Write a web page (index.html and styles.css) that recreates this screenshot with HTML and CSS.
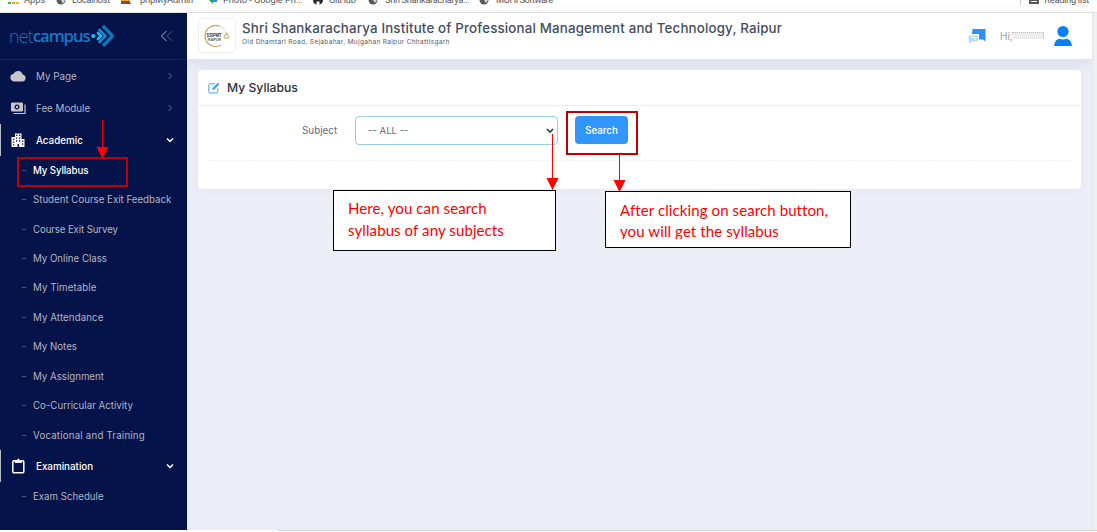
FILE: index.html
```html
<!DOCTYPE html>
<html lang="en">
<head>
<meta charset="utf-8">
<title>My Syllabus</title>
<link rel="stylesheet" href="styles.css">
</head>
<body>
<div class="bookmarks">
  <div class="bm w-apps"><svg width="12" height="6"><path fill="#4caf50" d="M0 2h3v2H0z"/><path fill="#e89b3c" d="M4 2h3v2H4z"/><path fill="#f3b51c" d="M8 2h3v2H8z"/></svg><span>Apps</span></div>
  <div class="bm w-local"><svg width="12" height="6"><circle cx="5" cy="0" r="4.5" fill="#55595e"/><path d="M5 0h4L7 4z" fill="#d5d7d9"/></svg><span>Localhost</span></div>
  <div class="bm w-php"><svg width="12" height="6"><path d="M1 0h8l2 4H1z" fill="#765438"/><path d="M1 0h9v1H1z" fill="#f0a13a"/></svg><span>phpMyAdmin</span></div>
  <div class="bm w-photo"><svg width="12" height="6"><path d="M1 0h4v4z" fill="#1fa463"/><path d="M5 0h4v2H5z" fill="#4285f4"/></svg><span>Photo - Google Ph...</span></div>
  <div class="bm w-git"><svg width="12" height="6"><circle cx="6" cy="0" r="5" fill="#24292e"/><path d="M4.500 1.500h3v4h-3z" fill="#fff"/></svg><span>GitHub</span></div>
  <div class="bm w-shri"><svg width="12" height="6"><circle cx="5" cy="0" r="4.5" fill="#55595e"/><path d="M5 0h4L7 3z" fill="#d5d7d9"/></svg><span>Shri Shankaracharya...</span></div>
  <div class="bm w-mohi"><svg width="12" height="6"><circle cx="5" cy="0" r="4.5" fill="#55595e"/><path d="M5 0h4L7 3z" fill="#d5d7d9"/></svg><span>MOHI Software</span></div>
  <div class="bm reading"><svg width="12" height="6"><path d="M1 0h10v4H1z" fill="#55595e"/><path d="M3 1h6v1H3z" fill="#eee"/></svg><span>Reading list</span></div>
</div>
<div class="app">
  <nav class="sidebar">
    <div class="brand">
      <div class="logo"><span class="net">net</span><span class="campus">campus</span>
        <svg class="mark" width="24" height="24" viewBox="0 0 24 24"><g fill="none" stroke-linecap="round" stroke-linejoin="round"><path d="M13 3l8.500 9-8.500 9" stroke="#1173b8" stroke-width="3.600" stroke-dasharray="5 1.500"/><path d="M8.500 6l6 6-6 6" stroke="#1688cd" stroke-width="2.800" stroke-dasharray="5 1.500"/><path d="M7 9l3 3-3 3" stroke="#20b5f3" stroke-width="2.800"/></g><circle cx="2.300" cy="12" r="2.100" fill="#25bdf6"/></svg>
      </div>
      <svg width="13" height="12" viewBox="0 0 13 12" fill="none" stroke-width="1.300"><path d="M6.500 1l-5 5 5 5" stroke="#666b90"/><path d="M12 1L7 6l5 5" stroke="#353b69"/></svg>
    </div>
    <div class="menu">
      <div class="item"><svg class="ico" viewBox="0 0 16 16"><path fill="#c7c7cb" d="M4 13.500a3.900 3.900 0 0 1-.5-7.700A4.900 4.900 0 0 1 12.700 6.600 3.500 3.500 0 0 1 12.500 13.500z"/></svg><span>My Page</span><svg class="chev" viewBox="0 0 8 8"><path d="M2.500 1l3 3-3 3"/></svg></div>
      <div class="item"><svg class="ico" viewBox="0 0 16 16"><path fill="#c7c7cb" fill-rule="evenodd" d="M2 2.500h10q1 0 1 1v7q0 1-1 1H2q-1 0-1-1v-7q0-1 1-1zM7 4.500a2.500 2.500 0 1 0 .01 0z"/><circle cx="7" cy="7" r="1.200" fill="#c7c7cb"/><path d="M15 4.500v9H3.500" fill="none" stroke="#c7c7cb" stroke-width="1.200"/></svg><span>Fee Module</span><svg class="chev" viewBox="0 0 8 8"><path d="M2.500 1l3 3-3 3"/></svg></div>
      <div class="item open"><svg class="ico" viewBox="0 0 16 16"><path fill="#fff" fill-rule="evenodd" d="M5 1.500h6.500V7h3v8H9v-3H7.500v3h-6V5H5zM6 2.800V4h1.300V2.800zM9 2.800V4h1.300V2.800zM6 5.500v1.300h1.300V5.500zM9 5.500v1.300h1.300V5.500zM3 6.500v1.300h1.300V6.500zM6 8.300v1.400h1.300V8.300zM9 8.300v1.400h1.300V8.300zM12 8.500v1.300h1.300V8.500zM3 9.500v1.300h1.300V9.500zM12 11.500v1.300h1.300v-1.300zM3 12.200v1.300h1.300v-1.300z"/></svg><span>Academic</span><svg class="chev" viewBox="0 0 8 8"><path d="M1 2.500l3 3 3-3"/></svg></div>
      <div class="subs">
      <div class="sub active"><i></i><span>My Syllabus</span></div>
      <div class="sub"><i></i><span>Student Course Exit Feedback</span></div>
      <div class="sub"><i></i><span class="tight">Course Exit Survey</span></div>
      <div class="sub"><i></i><span>My Online Class</span></div>
      <div class="sub"><i></i><span class="wide">My Timetable</span></div>
      <div class="sub"><i></i><span class="wide">My Attendance</span></div>
      <div class="sub"><i></i><span>My Notes</span></div>
      <div class="sub"><i></i><span>My Assignment</span></div>
      <div class="sub"><i></i><span>Co-Curricular Activity</span></div>
      <div class="sub"><i></i><span class="wider">Vocational and Training</span></div>
      </div>
      <div class="item open"><svg class="ico" viewBox="0 0 16 16"><rect x="2.800" y="2.800" width="11" height="12" rx="1" fill="none" stroke="#fff" stroke-width="1.500"/><path fill="#fff" d="M4.800 2h2L8.300.5 9.800 2h2v3h-7z"/></svg><span>Examination</span><svg class="chev" viewBox="0 0 8 8"><path d="M1 2.500l3 3 3-3"/></svg></div>
      <div class="sub"><i></i><span>Exam Schedule</span></div>
    </div>
  </nav>
  <div class="main">
    <header class="top">
      <div class="crest"><svg width="28" height="26" viewBox="0 0 28 26"><path d="M17 3.500A10.500 10.500 0 1 0 18 22" fill="none" stroke="#c5a670" stroke-width="1.300"/><path d="M17 3.500q4 1 5.500 5" fill="none" stroke="#e8dabd" stroke-width="1"/><path d="M23.500 10q3 4 2 5h-4q-1-1 2-5z" fill="none" stroke="#d9bf91" stroke-width="1.400"/><text x="3.500" y="13.500" textLength="15" lengthAdjust="spacingAndGlyphs" class="crest-a">SSIPMT</text><text x="5" y="17.800" textLength="13" lengthAdjust="spacingAndGlyphs" class="crest-b">RAIPUR</text></svg></div>
      <div class="names"><div class="name">Shri Shankaracharya Institute of Professional Management and Technology, Raipur</div><div class="addr">Old Dhamtari Road, Sejabahar, Mujgahan Raipur Chhattisgarh</div></div>
      <svg class="chat" width="18" height="16" viewBox="0 0 18 16"><path d="M4.500 1H17.500v12.500L15 11.500h-4V6H4z" fill="#2f8ffb"/><path d="M.5 7.500h9.500v6H4l-3 2z" fill="#b4dafc"/><path d="M3 9.700h4.500v2H6" stroke="#fff" fill="none"/></svg>
      <div class="hi">Hi,<span class="mask"></span></div>
      <svg class="user" width="20" height="22" viewBox="0 0 20 22" fill="#0582fb"><circle cx="10" cy="6.500" r="5.600"/><path d="M1 21q1-7.200 6-7.200 3 1.200 6 0 5 0 6 7.200z"/></svg>
    </header>
    <section class="card">
      <div class="card-head"><svg width="12" height="12" viewBox="0 0 12 12" fill="none" stroke="#4a9bf6"><path d="M9.800 6.500V9.500a1.500 1.500 0 0 1-1.500 1.500H2.300A1.500 1.500 0 0 1 .8 9.500V3.300A1.500 1.500 0 0 1 2.300 1.800H7"/><path d="M4.800 7.500l5.800-6" stroke-width="2.300"/></svg><h1>My Syllabus</h1></div>
      <div class="form">
        <label>Subject</label>
        <div class="select"><span>-- ALL --</span><svg width="8" height="6" viewBox="0 0 8 6"><path d="M1 1l3 3 3-3" fill="none" stroke="#363b48" stroke-width="1.600"/></svg></div>
        <button>Search</button>
      </div>
      <div class="rule"></div>
    </section>
  </div>
  <div class="scroll"></div>
</div>
<div class="foot"></div>

<div class="frame frame-syllabus"></div>
<div class="frame frame-search"></div>
<svg class="arrows" width="1097" height="532"><g stroke="#f00" stroke-width="1"><path d="M102.500 120v29M552.500 134v46M619.500 154v27"/></g><g fill="#f00"><path d="M96.500 147h12l-6 12zM546.500 178h12l-6 12zM613.500 180h12l-6 12z"/></g></svg>
<div class="note note-a"><div>Here, you can search</div><div>syllabus of any subjects</div></div>
<div class="note note-b"><div>After clicking on search button,</div><div class="cut">you will get the syllabus</div></div>
</body>
</html>
```
FILE: styles.css
```css
* { box-sizing: border-box; }
body { margin: 0; width: 1097px; height: 532px; overflow: hidden; position: relative; background: #fff; font-family: Inter, "Open Sans", sans-serif; color: #5f6472; }
svg { display: block; flex: none; }
span { white-space: nowrap; }
.bookmarks { height: 13px; display: flex; padding-left: 8px; border-bottom: 1px solid #e4e4e6; overflow: hidden; }
.bm { display: flex; gap: 4px; flex: none; height: 12px; font: 9.3px Roboto, sans-serif; color: #55595e; }
.bm span { line-height: 12px; margin-top: -6px; }
.w-apps { width: 48px; } .w-local { width: 64px; } .w-php { width: 88px; } .w-photo { width: 104px; } .w-git { width: 56px; } .w-shri { width: 111px; }
.w-local { letter-spacing: -.3px; }
.w-php { gap: 8px; letter-spacing: -.2px; }
.w-photo { gap: 3px; letter-spacing: -.1px; }
.w-git, .w-shri { gap: 5px; letter-spacing: -.35px; }
.w-mohi { gap: 5px; letter-spacing: -.5px; }
.reading { margin-left: auto; margin-right: 8px; padding-left: 8px; letter-spacing: -.3px; background: linear-gradient(#ccc, #ccc) left top / 1px 5px no-repeat; }
.app { display: flex; height: 517px; }
.sidebar { width: 187px; flex: none; background: #041349; }
.brand { height: 47px; border-bottom: 1px solid #142151; display: flex; align-items: center; justify-content: space-between; padding: 0 14px 1px 9px; }
.logo { display: flex; align-items: center; font: 18px/24px "Open Sans", sans-serif; }
.net { letter-spacing: -.9px; font-weight: 300; color: #2470ac; font-size: 18px; }
.campus { letter-spacing: -1.1px; font-weight: 600; color: #147ac6; font-size: 16.800px; }
.mark { margin-left: 1px; }
.item { height: 32px; display: flex; align-items: center; padding: 0 13px 0 10px; font-size: 9.800px; color: #b3b5c5; }
.item.open { color: #fff; font-weight: 500; box-shadow: inset 1px 0 #b8bbca; }
.item span { flex: 1; }
.ico { width: 16px; height: 16px; margin-right: 10px; }
.chev { width: 8px; height: 8px; fill: none; stroke: #686e92; stroke-width: 1; }
.open .chev { stroke: #fff; stroke-width: 1.500; }
.sub { height: 29.430px; display: flex; align-items: center; padding: 0 0 1px 22px; gap: 7px; font-size: 9.700px; color: #b3b5c5; }
.sub i { width: 4px; height: 1px; background: #4c557e; }
.sub.active { color: #fff; font-weight: 500; letter-spacing: -.1px; }
.tight { letter-spacing: -.12px; }
.wide { letter-spacing: .1px; }
.wider { letter-spacing: .2px; }
.main { width: 905px; background: #ebeef7; }
.top { height: 47px; background: #fff; border-bottom: 1px solid #e5e6ec; box-shadow: 0 2px 12px rgba(70, 65, 140, .12); display: flex; padding-left: 11px; }
.crest { width: 38px; height: 35px; margin: 5px 6px 0 0; border: 1px solid #f1f1f2; border-radius: 4px; display: flex; align-items: center; justify-content: center; }
.crest-a { font: bold 4.600px "Liberation Sans", sans-serif; fill: #333; }
.crest-b { font: bold 3px "Liberation Sans", sans-serif; fill: #555; }
.names { width: 725px; white-space: nowrap; }
.name { font-size: 13.300px; line-height: 20px; margin-top: 5px; font-weight: 500; letter-spacing: .18px; color: #454c60; }
.addr { font-size: 6.600px; line-height: 8px; letter-spacing: .29px; color: #555c6c; }
.chat { margin: 15px 14px 0 1px; }
.hi { font-size: 10px; line-height: 14px; margin-top: 16px; width: 54px; color: #9a9dab; display: flex; }
.mask { height: 7px; width: 32px; margin: 3px 0 0 -1px; background: #eee; border-top: 1px dotted #b7bac8; border-right: 1px solid #c9ccd9; }
.user { margin: 12px 0 0 -1px; }
.card { margin: 10px 11px 0; height: 119px; background: #fff; border-radius: 4px; box-shadow: 0 0 10px rgba(80, 70, 150, .05); }
.card-head { height: 36px; border-bottom: 1px solid #eeeff3; padding-left: 10px; display: flex; align-items: center; gap: 7px; }
h1 { margin: 0; font-size: 12.200px; font-weight: 500; color: #303039; white-space: nowrap; }
.form { height: 54px; padding: 10px 10px 0 104px; display: flex; font-size: 9.900px; color: #666b7b; }
label { width: 53px; line-height: 28px; }
.select { width: 203px; height: 29px; border: 1px solid #9acbe9; border-radius: 4px; padding: 0 3px 0 12px; display: flex; align-items: center; justify-content: space-between; font-size: 9.600px; }
button { margin-left: 17px; width: 53px; height: 28px; border: 0; border-radius: 4px; background: #3096fd; color: #fff; font: 500 9.700px Inter, sans-serif; padding: 0; }
.rule { margin: 0 10px; border-top: 1px dashed #f0f1f4; }
.scroll { width: 5px; background: #f0f0f1; border-left: 1px solid #e5e5e8; }
.foot { height: 2px; border-top: 1px solid #d2d3da; margin-left: 278px; }
.frame { position: absolute; border: 2px solid #c00000; }
.frame-syllabus { left: 17px; top: 157px; width: 111px; height: 30px; }
.frame-search { left: 566px; top: 111px; width: 72px; height: 44px; }
.arrows { position: absolute; left: 0; top: 0; }
.note { position: absolute; background: #fff; border: 1px solid #000; color: #f00; font: 15px/22px Lato, "Noto Sans", sans-serif; letter-spacing: .1px; white-space: nowrap; overflow: hidden; padding-left: 14px; }
.note-a { left: 333px; top: 190px; width: 223px; height: 61px; padding-top: 6px; }
.note-b { left: 605px; top: 191px; width: 246px; height: 57px; padding-top: 7px; }
.cut { height: 18px; line-height: 21px; overflow: hidden; }
```
